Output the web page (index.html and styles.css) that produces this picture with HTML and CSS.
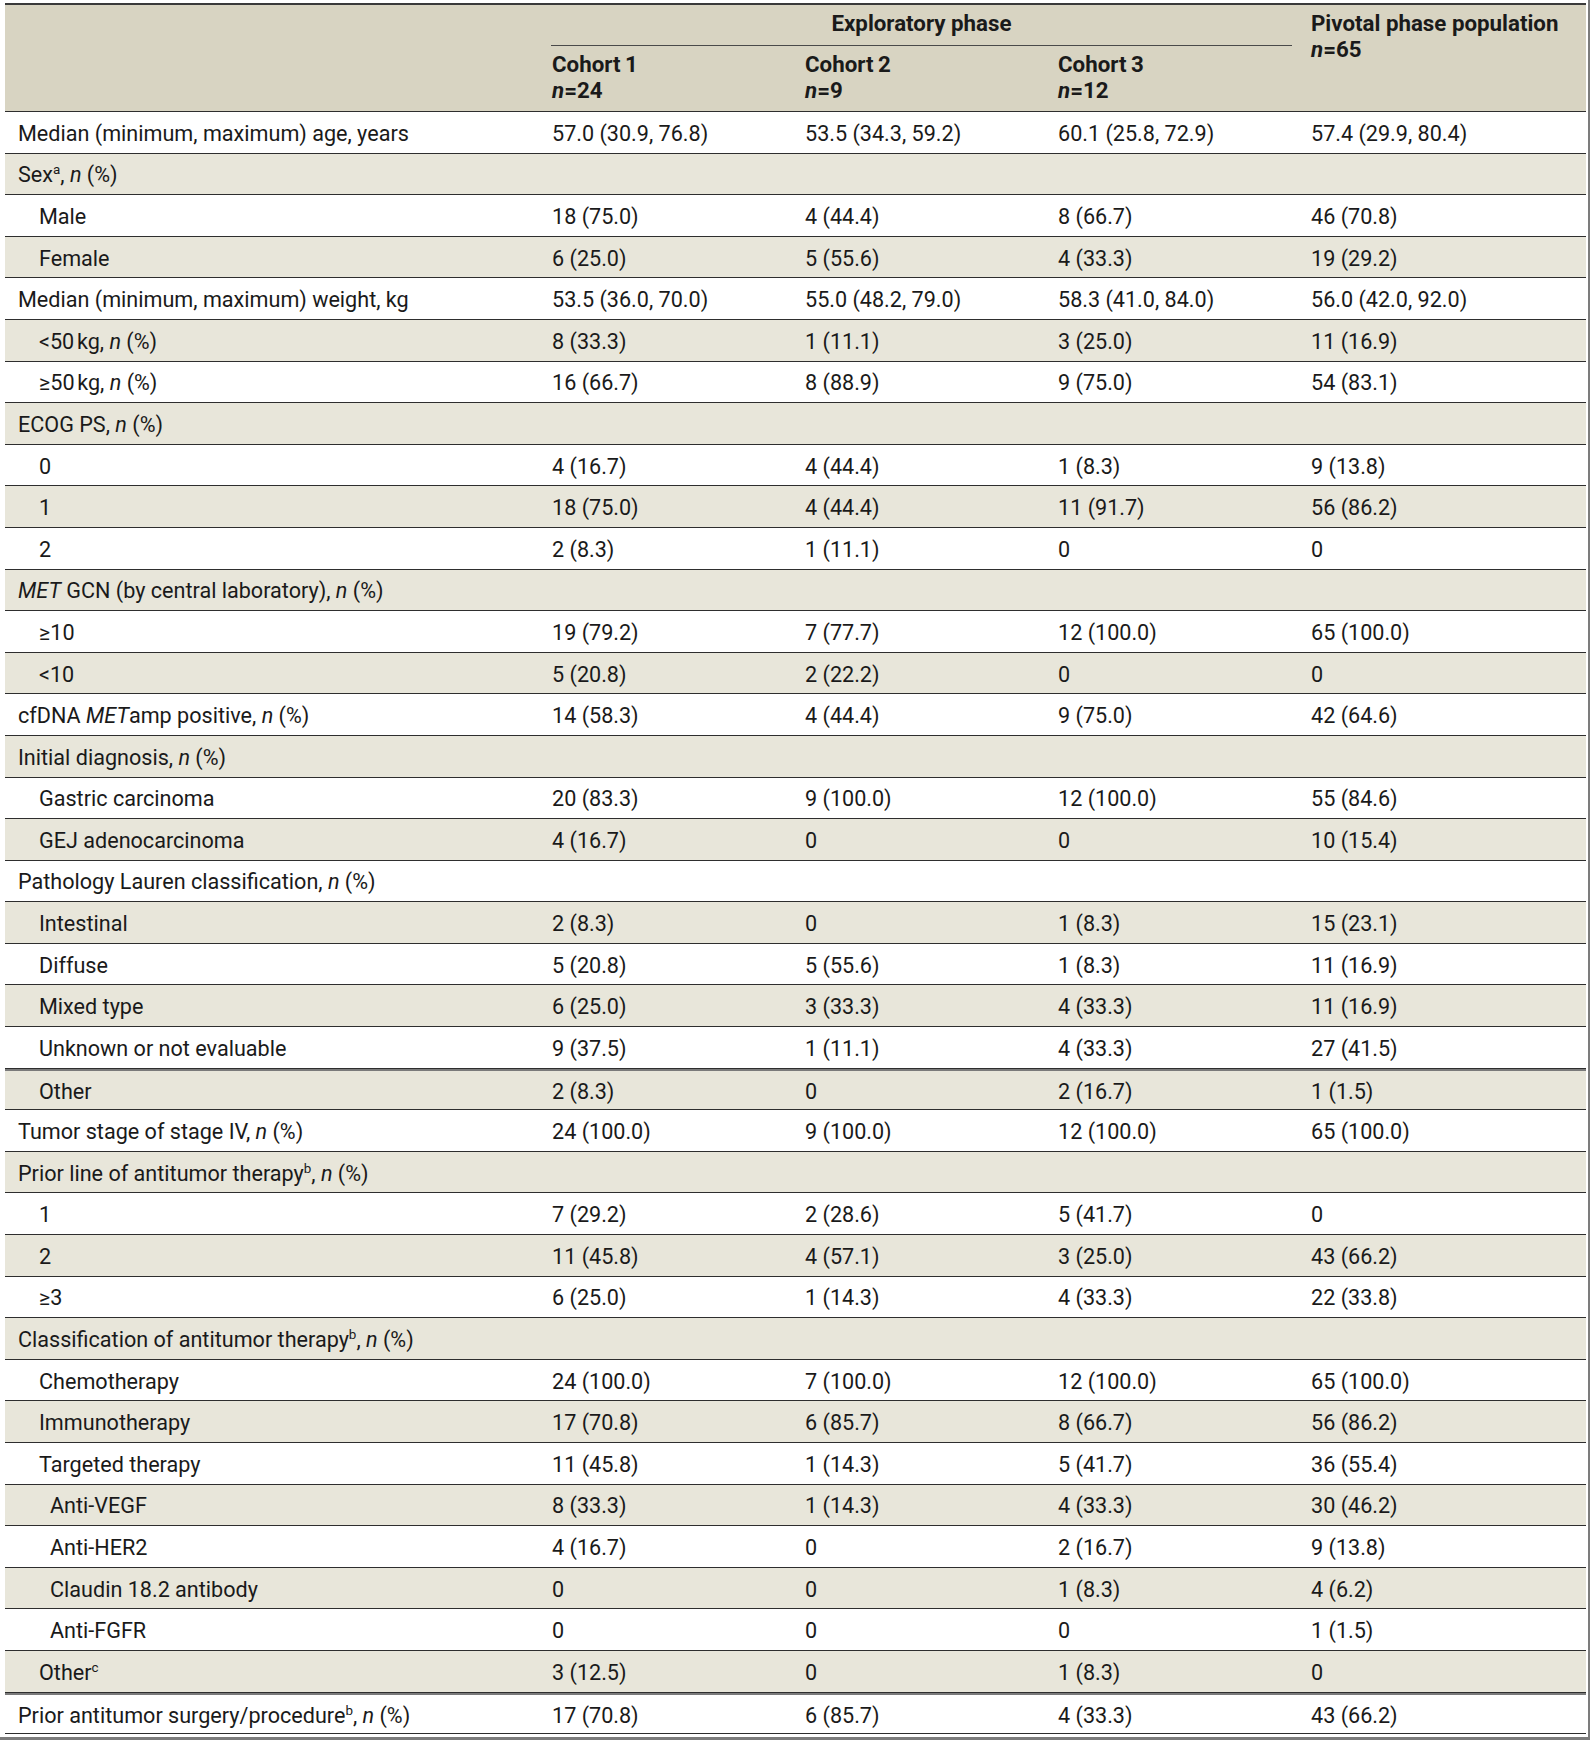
FILE: index.html
```html
<!DOCTYPE html>
<html lang="en">
<head>
    <meta charset="UTF-8">
    <meta name="viewport" content="width=device-width, initial-scale=1.0">
    <title>Baseline characteristics</title>
    <link rel="stylesheet" href="styles.css">
</head>
<body>
    <div class="frame">
        <table class="baseline">
            <thead>
                <tr class="head-top">
                    <th class="blank" rowspan="2"></th>
                    <th class="phase" colspan="3"><div class="phase-rule">Exploratory phase</div></th>
                    <th class="pivotal" rowspan="2">Pivotal phase population<br><i>n</i>=65</th>
                </tr>
                <tr class="head-sub">
                    <th>Cohort&#8201;1<br><i>n</i>=24</th>
                    <th>Cohort&#8201;2<br><i>n</i>=9</th>
                    <th>Cohort&#8201;3<br><i>n</i>=12</th>
                </tr>
            </thead>
            <tbody>
                <tr><td>Median (minimum, maximum) age, years</td><td>57.0 (30.9, 76.8)</td><td>53.5 (34.3, 59.2)</td><td>60.1 (25.8, 72.9)</td><td>57.4 (29.9, 80.4)</td></tr>
                <tr><td>Sex<sup>a</sup>, <i>n</i> (%)</td><td></td><td></td><td></td><td></td></tr>
                <tr><td class="lvl1">Male</td><td>18 (75.0)</td><td>4 (44.4)</td><td>8 (66.7)</td><td>46 (70.8)</td></tr>
                <tr><td class="lvl1">Female</td><td>6 (25.0)</td><td>5 (55.6)</td><td>4 (33.3)</td><td>19 (29.2)</td></tr>
                <tr><td>Median (minimum, maximum) weight, kg</td><td>53.5 (36.0, 70.0)</td><td>55.0 (48.2, 79.0)</td><td>58.3 (41.0, 84.0)</td><td>56.0 (42.0, 92.0)</td></tr>
                <tr><td class="lvl1">&lt;50&#8239;kg, <i>n</i> (%)</td><td>8 (33.3)</td><td>1 (11.1)</td><td>3 (25.0)</td><td>11 (16.9)</td></tr>
                <tr><td class="lvl1">&ge;50&#8239;kg, <i>n</i> (%)</td><td>16 (66.7)</td><td>8 (88.9)</td><td>9 (75.0)</td><td>54 (83.1)</td></tr>
                <tr><td>ECOG PS, <i>n</i> (%)</td><td></td><td></td><td></td><td></td></tr>
                <tr><td class="lvl1">0</td><td>4 (16.7)</td><td>4 (44.4)</td><td>1 (8.3)</td><td>9 (13.8)</td></tr>
                <tr><td class="lvl1">1</td><td>18 (75.0)</td><td>4 (44.4)</td><td>11 (91.7)</td><td>56 (86.2)</td></tr>
                <tr><td class="lvl1">2</td><td>2 (8.3)</td><td>1 (11.1)</td><td>0</td><td>0</td></tr>
                <tr><td><i>MET</i> GCN (by central laboratory), <i>n</i> (%)</td><td></td><td></td><td></td><td></td></tr>
                <tr><td class="lvl1">&ge;10</td><td>19 (79.2)</td><td>7 (77.7)</td><td>12 (100.0)</td><td>65 (100.0)</td></tr>
                <tr><td class="lvl1">&lt;10</td><td>5 (20.8)</td><td>2 (22.2)</td><td>0</td><td>0</td></tr>
                <tr><td>cfDNA <i>MET</i>amp positive, <i>n</i> (%)</td><td>14 (58.3)</td><td>4 (44.4)</td><td>9 (75.0)</td><td>42 (64.6)</td></tr>
                <tr><td>Initial diagnosis, <i>n</i> (%)</td><td></td><td></td><td></td><td></td></tr>
                <tr><td class="lvl1">Gastric carcinoma</td><td>20 (83.3)</td><td>9 (100.0)</td><td>12 (100.0)</td><td>55 (84.6)</td></tr>
                <tr><td class="lvl1">GEJ adenocarcinoma</td><td>4 (16.7)</td><td>0</td><td>0</td><td>10 (15.4)</td></tr>
                <tr><td>Pathology Lauren classification, <i>n</i> (%)</td><td></td><td></td><td></td><td></td></tr>
                <tr><td class="lvl1">Intestinal</td><td>2 (8.3)</td><td>0</td><td>1 (8.3)</td><td>15 (23.1)</td></tr>
                <tr><td class="lvl1">Diffuse</td><td>5 (20.8)</td><td>5 (55.6)</td><td>1 (8.3)</td><td>11 (16.9)</td></tr>
                <tr><td class="lvl1">Mixed type</td><td>6 (25.0)</td><td>3 (33.3)</td><td>4 (33.3)</td><td>11 (16.9)</td></tr>
                <tr><td class="lvl1">Unknown or not evaluable</td><td>9 (37.5)</td><td>1 (11.1)</td><td>4 (33.3)</td><td>27 (41.5)</td></tr>
                <tr class="heavy"><td class="lvl1">Other</td><td>2 (8.3)</td><td>0</td><td>2 (16.7)</td><td>1 (1.5)</td></tr>
                <tr><td>Tumor stage of stage IV, <i>n</i> (%)</td><td>24 (100.0)</td><td>9 (100.0)</td><td>12 (100.0)</td><td>65 (100.0)</td></tr>
                <tr><td>Prior line of antitumor therapy<sup>b</sup>, <i>n</i> (%)</td><td></td><td></td><td></td><td></td></tr>
                <tr><td class="lvl1">1</td><td>7 (29.2)</td><td>2 (28.6)</td><td>5 (41.7)</td><td>0</td></tr>
                <tr><td class="lvl1">2</td><td>11 (45.8)</td><td>4 (57.1)</td><td>3 (25.0)</td><td>43 (66.2)</td></tr>
                <tr><td class="lvl1">&ge;3</td><td>6 (25.0)</td><td>1 (14.3)</td><td>4 (33.3)</td><td>22 (33.8)</td></tr>
                <tr><td>Classification of antitumor therapy<sup>b</sup>, <i>n</i> (%)</td><td></td><td></td><td></td><td></td></tr>
                <tr><td class="lvl1">Chemotherapy</td><td>24 (100.0)</td><td>7 (100.0)</td><td>12 (100.0)</td><td>65 (100.0)</td></tr>
                <tr><td class="lvl1">Immunotherapy</td><td>17 (70.8)</td><td>6 (85.7)</td><td>8 (66.7)</td><td>56 (86.2)</td></tr>
                <tr><td class="lvl1">Targeted therapy</td><td>11 (45.8)</td><td>1 (14.3)</td><td>5 (41.7)</td><td>36 (55.4)</td></tr>
                <tr><td class="lvl2">Anti-VEGF</td><td>8 (33.3)</td><td>1 (14.3)</td><td>4 (33.3)</td><td>30 (46.2)</td></tr>
                <tr><td class="lvl2">Anti-HER2</td><td>4 (16.7)</td><td>0</td><td>2 (16.7)</td><td>9 (13.8)</td></tr>
                <tr><td class="lvl2">Claudin 18.2 antibody</td><td>0</td><td>0</td><td>1 (8.3)</td><td>4 (6.2)</td></tr>
                <tr><td class="lvl2">Anti-FGFR</td><td>0</td><td>0</td><td>0</td><td>1 (1.5)</td></tr>
                <tr><td class="lvl1">Other<sup>c</sup></td><td>3 (12.5)</td><td>0</td><td>1 (8.3)</td><td>0</td></tr>
                <tr class="heavy"><td>Prior antitumor surgery/procedure<sup>b</sup>, <i>n</i> (%)</td><td>17 (70.8)</td><td>6 (85.7)</td><td>4 (33.3)</td><td>43 (66.2)</td></tr>
            </tbody>
        </table>
    </div>
</body>
</html>
```
FILE: styles.css
```css
* {
    margin: 0;
    padding: 0;
    box-sizing: border-box;
}
body {
    background: #fff;
    font-family: Roboto, "Liberation Sans", sans-serif;
    color: #1a1a1a;
}
.frame {
    width: 1590px;
    height: 1740px;
    padding: 3px 0 0 5px;
    border-right: 2px solid #7c7c7c;
    border-bottom: 3px solid #7c7c7c;
    overflow: hidden;
}
.baseline {
    width: 1581px;
    border-collapse: collapse;
    table-layout: fixed;
    font-size: 21.6px;
    border-top: 2px solid #3a3a3a;
}
.baseline th {
    background-color: #d8d4c2;
    text-align: left;
    font-size: 22.3px;
    font-weight: 700;
    line-height: 26px;
    vertical-align: top;
    padding: 5px 13px 0;
    border-bottom: 1px solid #2e2e2e;
}
.baseline th i {
    font-style: italic;
}
.blank {
    width: 534px;
}
.pivotal {
    width: 288px;
}
.head-top th {
    height: 41px;
}
.baseline .phase {
    padding: 5px 6px 0 12px;
    border-bottom: none;
}
.phase-rule {
    text-align: center;
    padding-bottom: 9px;
    border-bottom: 1px solid #4a4a4a;
}
.head-sub th {
    height: 64.5px;
    padding-bottom: 8px;
}
.baseline td {
    height: 41.6px;
    padding: 2px 13px 0;
    vertical-align: middle;
    border-bottom: 1px solid #2e2e2e;
    white-space: nowrap;
}
.baseline tbody tr:nth-child(even) td {
    background-color: #e8e6da;
}
.baseline .lvl1 {
    padding-left: 34px;
}
.baseline .lvl2 {
    padding-left: 45px;
}
.baseline .heavy td {
    padding-top: 5px;
    box-shadow: inset 0 2px 0 #7a7a7a;
}
sup {
    font-size: 0.62em;
    vertical-align: 0.62em;
    line-height: 0;
}
```
